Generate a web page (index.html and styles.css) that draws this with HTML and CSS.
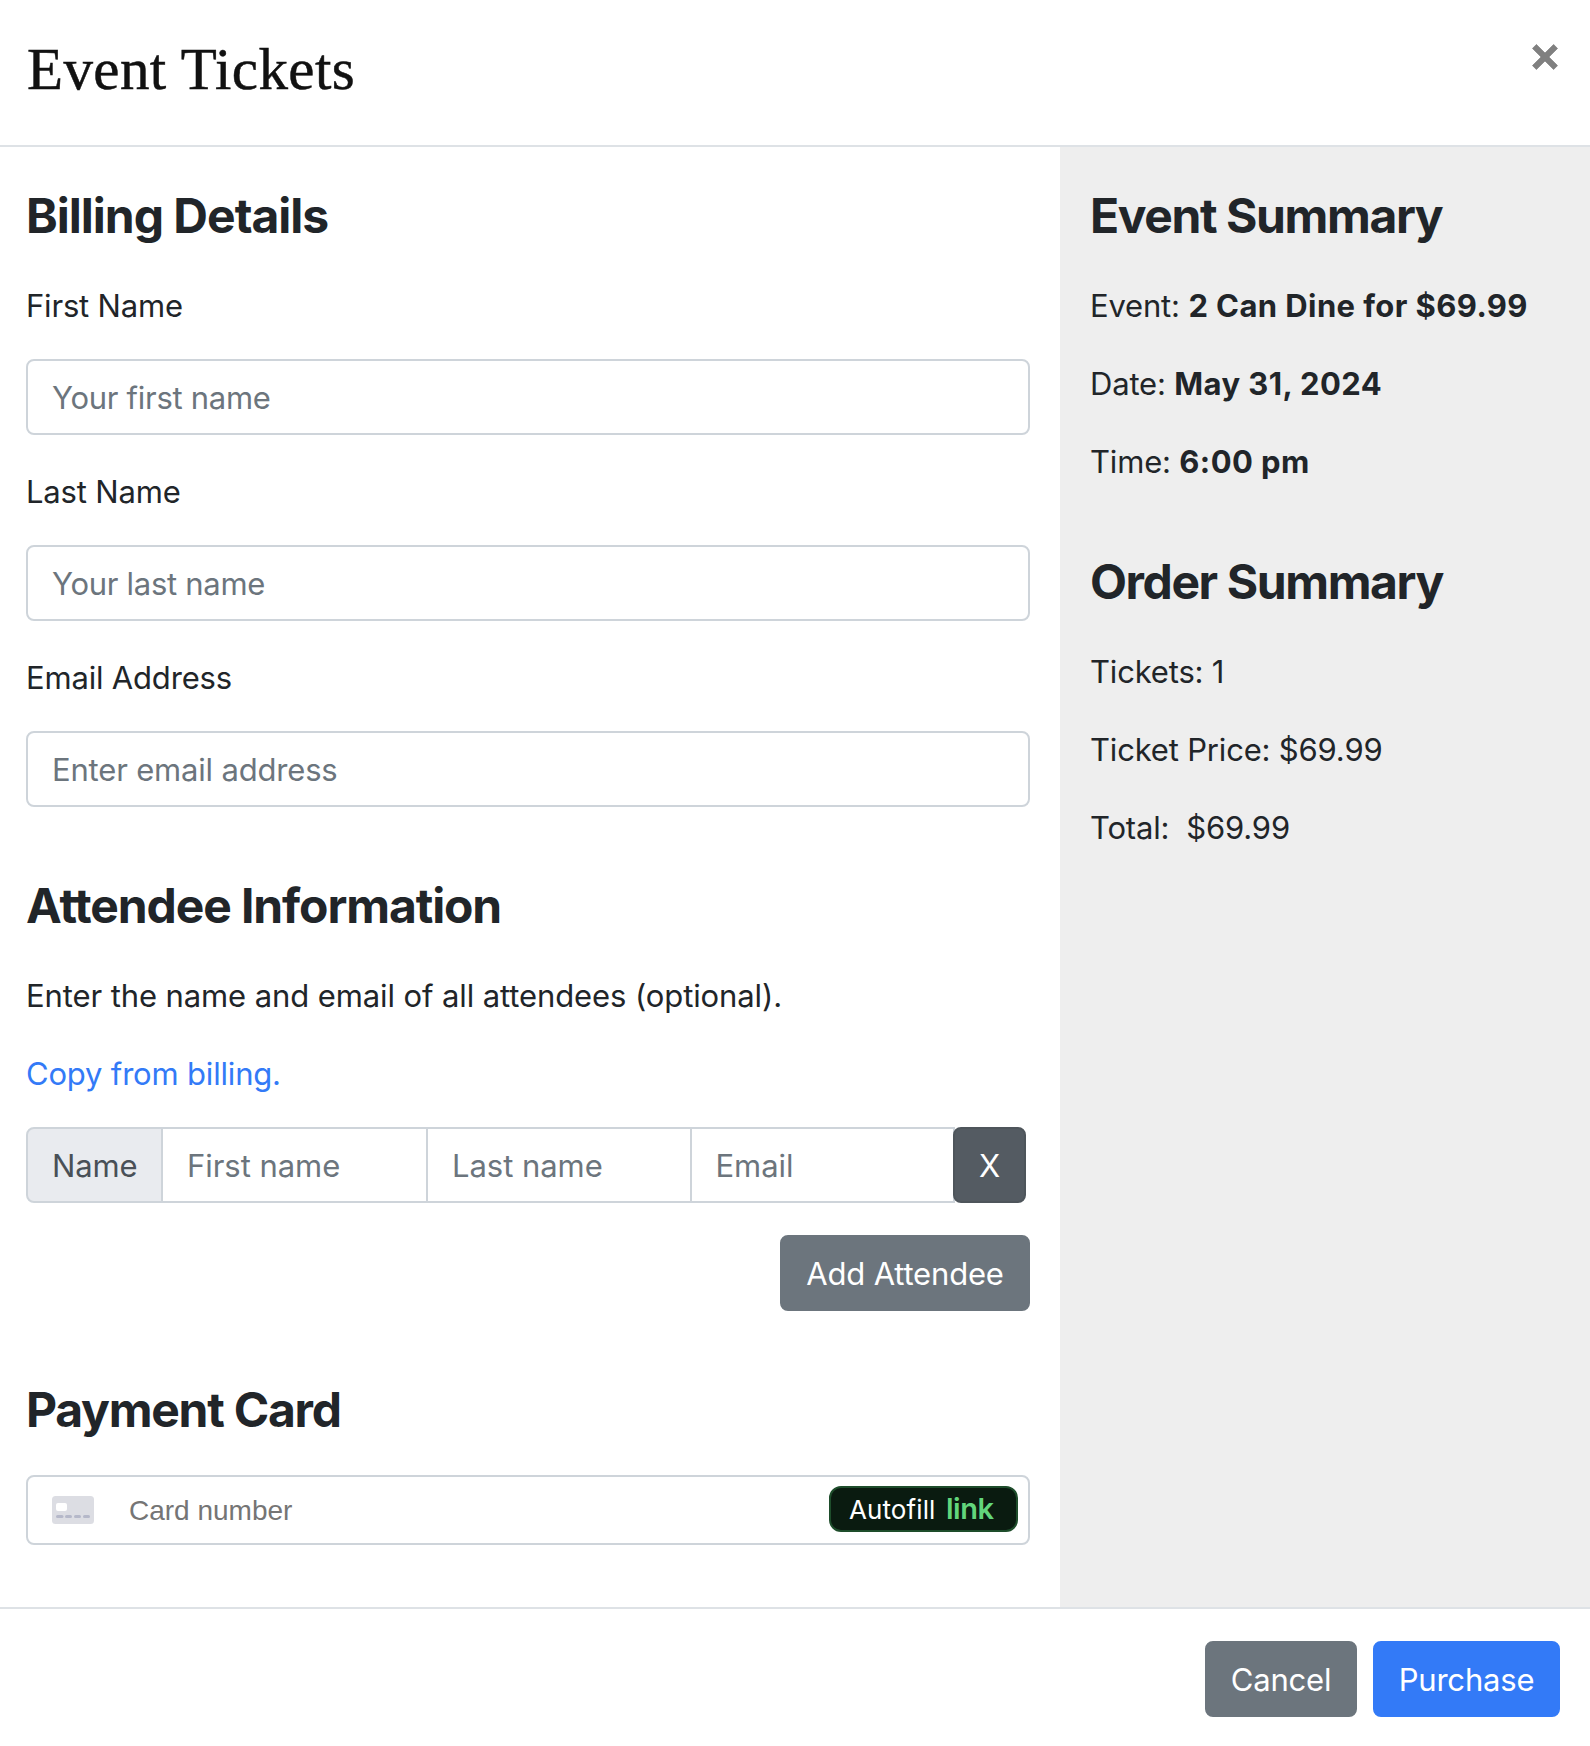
FILE: index.html
```html
<!DOCTYPE html>
<html lang="en">
<head>
<meta charset="utf-8">
<title>Event Tickets</title>
<link rel="stylesheet" href="styles.css">
</head>
<body>
<div class="modal">
  <header class="modal-header">
    <h1 class="title">Event Tickets</h1>
    <button class="close" type="button" aria-label="Close">
      <svg width="26" height="26" viewBox="0 0 26 26"><path d="M4.4.5 13 9.1 21.6.5 25.5 4.4 16.9 13 25.5 21.6 21.6 25.5 13 16.9 4.4 25.5.5 21.6 9.1 13 .5 4.4Z" fill="#808080" stroke="#808080" stroke-width=".8" stroke-linejoin="round"/></svg>
    </button>
  </header>

  <main class="modal-body">
    <form class="details">
      <section>
        <h2 class="heading">Billing Details</h2>
        <div class="field">
          <label class="label" for="first">First Name</label>
          <input class="input tight" id="first" type="text" placeholder="Your first name">
        </div>
        <div class="field">
          <label class="label" for="last">Last Name</label>
          <input class="input tight" id="last" type="text" placeholder="Your last name">
        </div>
        <div class="field">
          <label class="label" for="email">Email Address</label>
          <input class="input" id="email" type="text" placeholder="Enter email address">
        </div>
      </section>

      <section>
        <h2 class="heading heading-attendee">Attendee Information</h2>
        <p class="text intro">Enter the name and email of all attendees (optional).</p>
        <p class="text"><a class="copy-link" href="#">Copy from billing.</a></p>
        <div class="attendee">
          <span class="addon">Name</span>
          <input class="input cell cell-first" type="text" placeholder="First name">
          <input class="input cell" type="text" placeholder="Last name">
          <input class="input cell" type="text" placeholder="Email">
          <button class="btn btn-remove" type="button">X</button>
        </div>
        <div class="attendee-actions">
          <button class="btn btn-secondary" type="button">Add Attendee</button>
        </div>
      </section>

      <section>
        <h2 class="heading heading-card">Payment Card</h2>
        <div class="card-field">
          <svg class="card-icon" width="42" height="28" viewBox="0 0 42 28">
            <rect width="42" height="28" rx="3.5" fill="#dcdde3"/>
            <rect x="4" y="7" width="11" height="8" rx="2" fill="#fff"/>
            <g fill="#b5b8c9"><rect x="4" y="19" width="7.5" height="3" rx="1.5"/><rect x="13" y="19" width="7" height="3" rx="1.5"/><rect x="22" y="19" width="7" height="3" rx="1.5"/><rect x="31" y="19" width="7" height="3" rx="1.5"/></g>
          </svg>
          <input class="card-input" type="text" placeholder="Card number">
          <button class="autofill" type="button"><span class="autofill-text">Autofill</span><span class="autofill-brand">link</span></button>
        </div>
      </section>
    </form>

    <aside class="summary">
      <section>
        <h2 class="heading">Event Summary</h2>
        <p class="text">Event: <strong>2 Can Dine for $69.99</strong></p>
        <p class="text">Date: <strong>May 31, 2024</strong></p>
        <p class="text">Time: <strong>6:00 pm</strong></p>
      </section>
      <section>
        <h2 class="heading">Order Summary</h2>
        <p class="text">Tickets: 1</p>
        <p class="text">Ticket Price: $69.99</p>
        <p class="text">Total:&nbsp; $69.99</p>
      </section>
    </aside>
  </main>

  <footer class="modal-footer">
    <button class="btn btn-secondary" type="button">Cancel</button>
    <button class="btn btn-primary" type="button">Purchase</button>
  </footer>
</div>
</body>
</html>
```
FILE: styles.css
```css
*,
*::before,
*::after {
  box-sizing: border-box;
}

body,
h1,
h2,
p {
  margin: 0;
}

body {
  background: #fff;
  color: #212529;
  font: 400 31px/48px Inter, "Liberation Sans", sans-serif;
  letter-spacing: -0.18px;
}

input,
button {
  margin: 0;
  font: inherit;
  letter-spacing: inherit;
}

.modal {
  display: flex;
  flex-direction: column;
  height: 1746px;
}

.modal-header {
  display: flex;
  justify-content: space-between;
  align-items: flex-start;
  height: 147px;
  padding: 34px 32px 0 27px;
  border-bottom: 2px solid #dee2e6;
}

.title {
  color: #111;
  font: 400 59px/70px "Liberation Serif", serif;
  letter-spacing: 0.4px;
  -webkit-text-stroke: 0.5px #111;
}

.close {
  display: flex;
  margin-top: 10px;
  padding: 0;
  border: 0;
  background: none;
}

.modal-body {
  display: grid;
  grid-template-columns: 1060px 1fr;
  height: 1460px;
}

.details,
.summary {
  display: flex;
  flex-direction: column;
  padding-top: 40px;
}

.details {
  gap: 70px;
  padding-left: 26px;
  padding-right: 30px;
}

.summary {
  gap: 67px;
  padding-left: 30px;
  background: #eee;
}

.heading {
  margin-bottom: 37px;
  font-size: 48px;
  font-weight: 700;
  line-height: 58px;
  letter-spacing: -1px;
}

.summary .heading {
  letter-spacing: -1.4px;
}

.heading-attendee {
  letter-spacing: -1.1px;
}

.heading-card {
  margin-bottom: 36px;
  letter-spacing: -1.25px;
}

.field {
  display: flex;
  flex-direction: column;
  gap: 29px;
}

.field + .field {
  margin-top: 33px;
}

.label {
  display: block;
}

.text + .text {
  margin-top: 30px;
}

.intro {
  letter-spacing: -0.1px;
}

strong {
  font-weight: 700;
  letter-spacing: 0.41px;
}

.input {
  width: 100%;
  height: 76px;
  padding: 0 24px;
  border: 2px solid #ced4da;
  border-radius: 8px;
  background: #fff;
}

.tight {
  letter-spacing: -0.28px;
}

.input::placeholder {
  color: #6c757d;
  opacity: 1;
}

.copy-link {
  color: #337af7;
  text-decoration: none;
}

.attendee {
  display: flex;
  width: 1000px;
  margin-top: 29px;
}

.addon {
  width: 137px;
  height: 76px;
  padding: 13px 0 11px 24px;
  border: 2px solid #ced4da;
  border-radius: 8px 0 0 8px;
  background: #e9ebef;
  color: #495057;
}

.cell {
  flex: 1;
  width: 0;
  min-width: 0;
  margin-left: -2px;
  border-radius: 0;
  letter-spacing: -0.04px;
}

.cell-first {
  flex: 0 0 267px;
}

.btn {
  height: 76px;
  padding: 1px 0 0;
  border: 2px solid transparent;
  border-radius: 8px;
  color: #fff;
  text-align: center;
  white-space: nowrap;
}

.btn-secondary {
  border-color: #6c757d;
  background: #6c757d;
}

.btn-primary {
  width: 187px;
  border-color: #337af7;
  background: #337af7;
}

.btn-remove {
  position: relative;
  width: 73px;
  margin-left: -2px;
  border-color: #4e555b;
  background: #545b62;
}

.attendee-actions {
  display: flex;
  justify-content: flex-end;
  margin-top: 32px;
}

.attendee-actions .btn {
  width: 250px;
}

.card-field {
  display: flex;
  align-items: center;
  height: 70px;
  padding: 0 10px 0 24px;
  border: 2px solid #ced4da;
  border-radius: 8px;
}

.card-input {
  flex: 1;
  min-width: 0;
  height: 60px;
  margin-left: 35px;
  padding: 1px 0 0;
  border: 0;
  background: none;
  font-family: "Liberation Sans", Arial, sans-serif;
  font-size: 28px;
  letter-spacing: 0;
}

.card-input::placeholder {
  color: #757575;
  opacity: 1;
}

.autofill {
  display: flex;
  align-items: baseline;
  width: 189px;
  height: 46px;
  margin-bottom: 2px;
  padding: 0 0 0 18px;
  border: 2px solid #1e4d2b;
  border-radius: 12px;
  background: #0a1b10;
  color: #fff;
  line-height: 42px;
}

.autofill-text {
  width: 97px;
  font-size: 26px;
  letter-spacing: 0.1px;
  text-align: left;
}

.autofill-brand {
  color: #62d67c;
  font-size: 29px;
  font-weight: 600;
  letter-spacing: -0.5px;
}

.modal-footer {
  display: flex;
  justify-content: flex-end;
  gap: 16px;
  height: 139px;
  padding: 32px 30px 0;
  border-top: 2px solid #dee2e6;
}

.modal-footer .btn-secondary {
  width: 152px;
}
```
